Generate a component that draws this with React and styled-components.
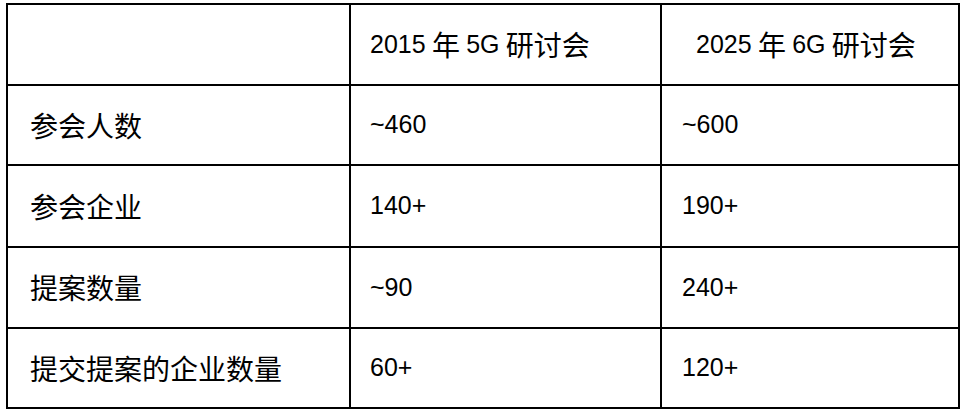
import React from "react";
import styled, { createGlobalStyle } from "styled-components";

const GlobalStyle = createGlobalStyle`
	body {
		margin: 0;
		background: #fff;
	}
`;

const Grid = styled.div`
	display: grid;
	grid-template-columns: 341px 309px 296px;
	grid-template-rows: 79px 78px 80px 79px 78px;
	gap: 2px;
	padding: 2px;
	width: 954px;
	box-sizing: border-box;
	margin: 3px 0 0 6px;
	background: #000;
`;

const Cell = styled.div`
	display: flex;
	align-items: center;
	background: #fff;
	padding-left: ${p => p.$indent || 20}px;
	padding-bottom: 1px;
	color: #000;
	font-family: "Noto Sans CJK SC", "Liberation Sans", sans-serif;
	font-size: 28px;
	line-height: 1;
	white-space: pre;
`;

const Num = styled.span`
	font-family: "Liberation Sans", "Noto Sans CJK SC", sans-serif;
	font-size: 25px;
`;

const rows = [
	["参会人数", "~460", "~600"],
	["参会企业", "140+", "190+"],
	["提案数量", "~90", "240+"],
	["提交提案的企业数量", "60+", "120+"],
];

const App = () => (
	<>
		<GlobalStyle />
		<Grid>
			<Cell />
			<Cell $indent={19}>
				<Num>2015</Num> 年 <Num>5G</Num> 研讨会
			</Cell>
			<Cell $indent={34}>
				<Num>2025</Num> 年 <Num>6G</Num> 研讨会
			</Cell>
			{rows.map(r => (
				<React.Fragment key={r[0]}>
					<Cell $indent={22}>{r[0]}</Cell>
					<Cell $indent={19}><Num>{r[1]}</Num></Cell>
					<Cell $indent={20}><Num>{r[2]}</Num></Cell>
				</React.Fragment>
			))}
		</Grid>
	</>
);

export default App;
